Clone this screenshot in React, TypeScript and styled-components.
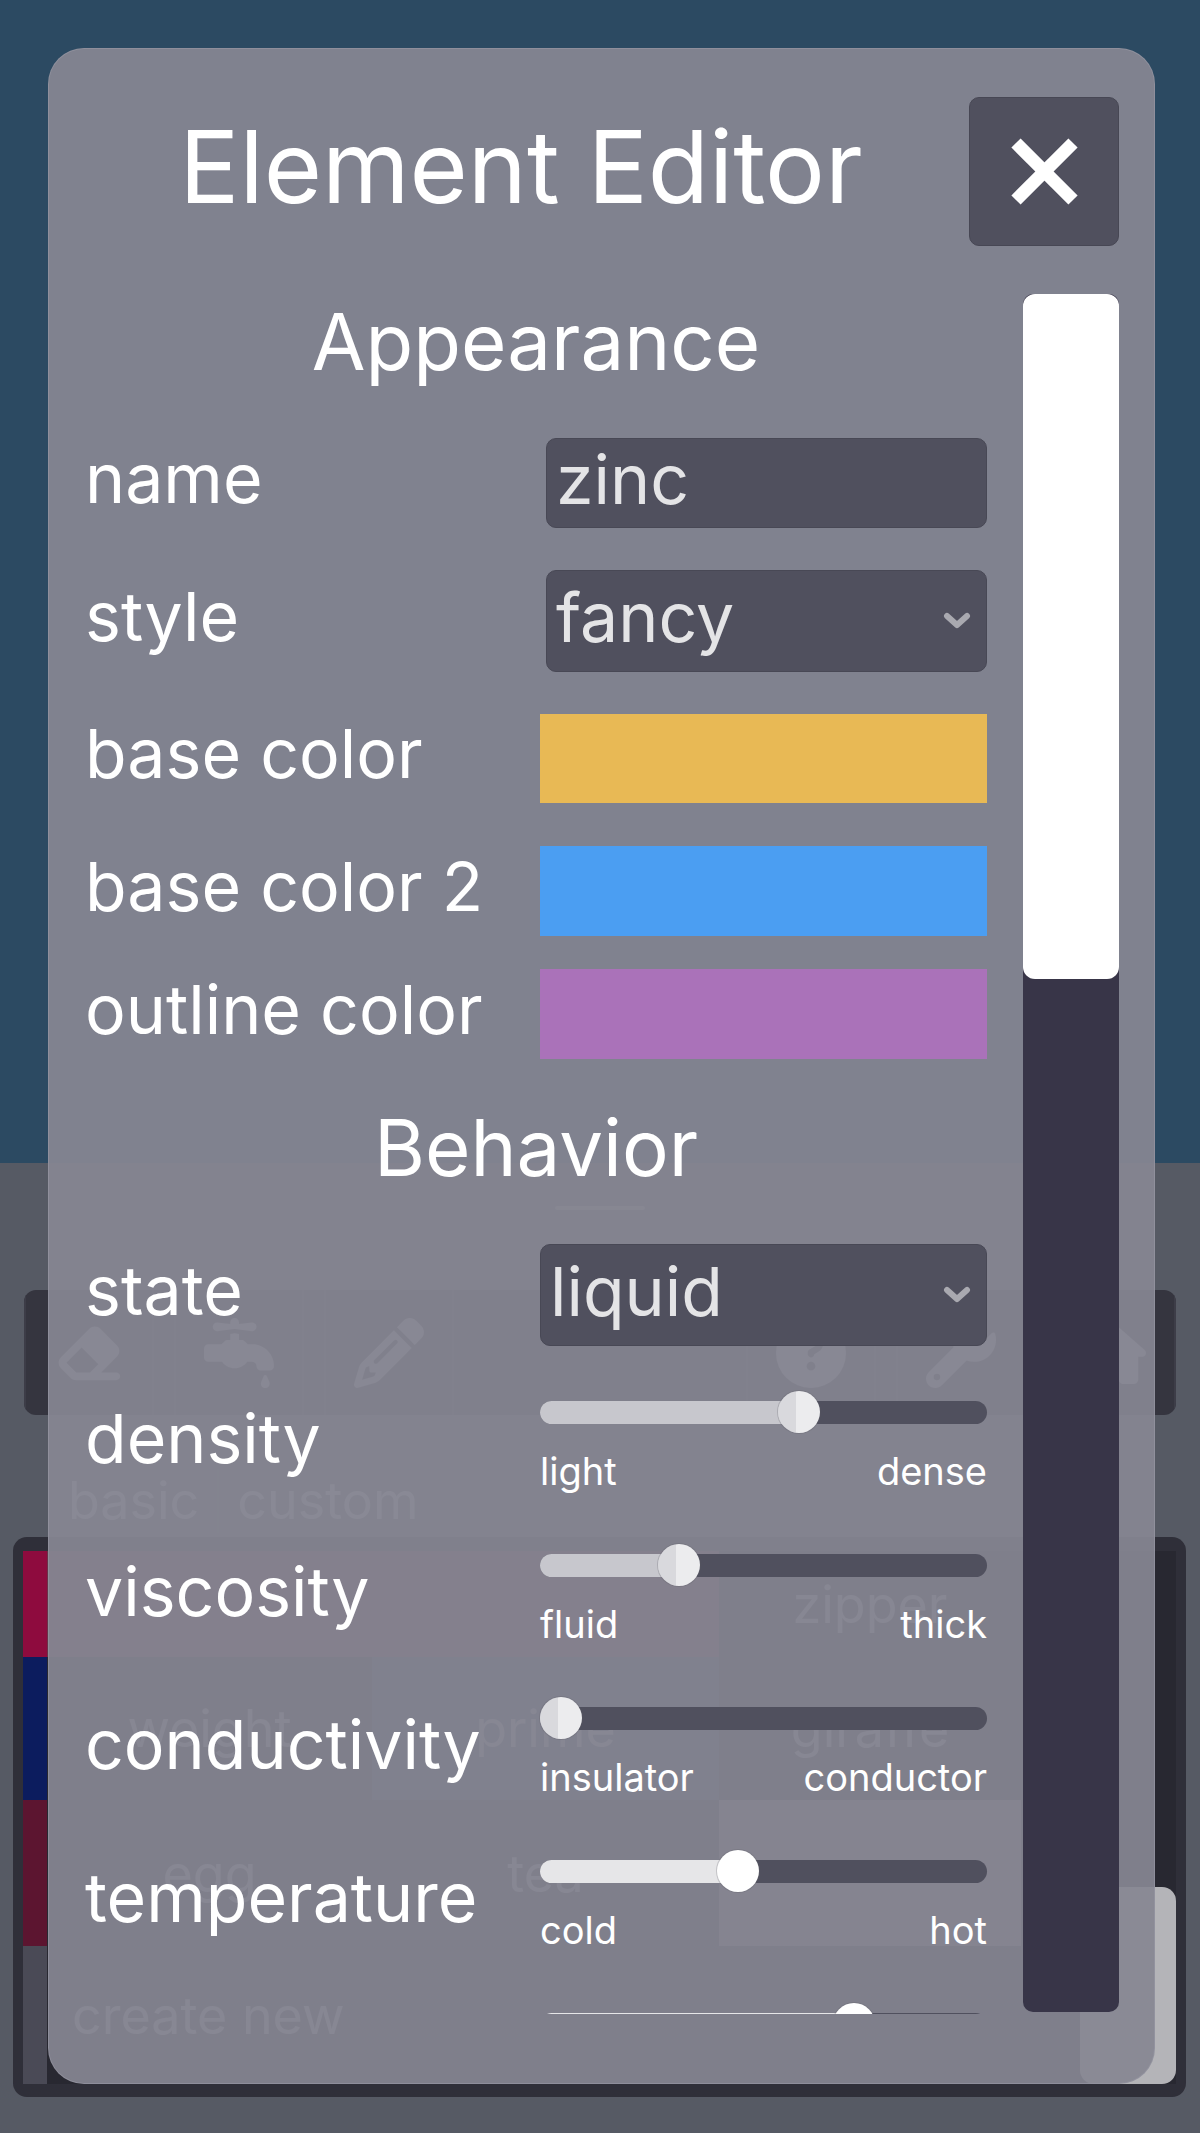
import React from "react";
import styled, { createGlobalStyle } from "styled-components";
import {
  FaEraser,
  FaFaucetDrip,
  FaPencil,
  FaCircleQuestion,
  FaWrench,
  FaHouse,
} from "react-icons/fa6";

const FONT = `Inter, "Noto Sans", "DejaVu Sans", sans-serif`;

const GlobalStyle = createGlobalStyle`
  * { box-sizing: border-box; }
  html, body { margin: 0; padding: 0; background: #565a64; }
  body { font-family: ${FONT}; }
`;

/* ---------- background app ---------- */

const Screen = styled.div`
  position: relative;
  width: 1200px;
  height: 2133px;
  overflow: hidden;
  display: flex;
  flex-direction: column;
  background: #565a64;
  font-family: ${FONT};
`;

const Canvas = styled.div`
  flex: none;
  height: 1163px;
  background: #2c4a62;
`;

const Dock = styled.div`
  flex: 1;
  display: flex;
  flex-direction: column;
`;

const Handle = styled.div`
  align-self: center;
  width: 90px;
  height: 4px;
  margin-top: 43px;
  border-radius: 2px;
  background: rgba(255, 255, 255, 0.3);
`;

const Toolbar = styled.div`
  margin: 80px 24px 0;
  height: 125px;
  border-radius: 12px;
  background: #35353f;
  display: flex;
  justify-content: space-between;
  overflow: hidden;
`;

const ToolGroup = styled.div`
  display: flex;
  gap: 20px;
`;

const ToolButton = styled.div`
  width: 130px;
  height: 100%;
  display: flex;
  align-items: center;
  justify-content: center;
  color: #9a9aa8;
  font-size: 70px;
  border-left: 2px solid #3d3d48;
  border-right: 2px solid #3d3d48;
`;

const Tabs = styled.div`
  margin-top: 50px;
  height: 72px;
  display: flex;
  align-items: center;
  padding-left: 68px;
  font-size: 52px;
  line-height: 64px;
  color: #a8aab4;
`;

const Tab = styled.span`
  padding-right: 18px;
  & + & {
    padding-left: 18px;
    border-left: 2px solid #5e626b;
  }
`;

const Panel = styled.div`
  position: relative;
  margin: 0 14px 0 13px;
  height: 560px;
  border-radius: 14px;
  background: #2f2f39;
  padding: 14px 10px 13px 10px;
  display: flex;
  flex-direction: column;
`;

const ListRow = styled.div<{ $h?: number }>`
  display: grid;
  grid-template-columns: 24px 325px 347px 302px 1fr;
  ${(p) => (p.$h ? `height: ${p.$h}px;` : "flex: 1;")}
`;

const Strip = styled.div<{ $c: string }>`
  background: ${(p) => p.$c};
`;

const Cell = styled.div<{ $tint?: string; $left?: boolean }>`
  display: flex;
  align-items: center;
  justify-content: ${(p) => (p.$left ? "flex-start" : "center")};
  padding-left: ${(p) => (p.$left ? "25px" : "0")};
  font-size: 52px;
  color: #8e8e9c;
  background: ${(p) => p.$tint || "#282831"};
`;

const FloatButton = styled.div`
  position: absolute;
  right: 10px;
  bottom: 13px;
  width: 96px;
  height: 197px;
  border-radius: 14px;
  background: #b4b4b8;
`;

/* ---------- modal ---------- */

const Modal = styled.section`
  position: absolute;
  left: 48px;
  top: 48px;
  width: 1107px;
  height: 2036px;
  border: 1px solid rgba(150, 150, 162, 0.7);
  border-radius: 36px;
  background: rgba(134, 134, 146, 0.93);
  padding: 48px 35px 71px 0;
  display: flex;
  flex-direction: column;
  color: #ffffff;
`;

const Header = styled.header`
  flex: none;
  height: 149px;
  display: flex;
  align-items: center;
  gap: 16px;
  padding-left: 40px;
`;

const Title = styled.h1`
  flex: 1;
  margin: 0 0 10px;
  text-align: center;
  font-size: 100px;
  font-weight: 400;
  line-height: 1.2;
  letter-spacing: 0;
`;

const CloseButton = styled.button`
  flex: none;
  width: 150px;
  height: 149px;
  padding: 0;
  border: 1px solid #474754;
  border-radius: 10px;
  background: #50505e;
  display: flex;
  align-items: center;
  justify-content: center;
`;

const Body = styled.div`
  flex: 1;
  min-height: 0;
  margin-top: 48px;
  display: flex;
`;

const Scroller = styled.div`
  flex: 1;
  min-width: 0;
  overflow: hidden;
  padding: 0 36px;
  margin-bottom: -2px;
`;

const ScrollTrack = styled.div`
  flex: none;
  width: 96px;
  border-radius: 10px;
  background: #383548;
  display: flex;
  flex-direction: column;
`;

const ScrollThumb = styled.div`
  height: 685px;
  border-radius: 12px;
  background: #ffffff;
`;

const SectionTitle = styled.h2<{ $h: number; $pt: number }>`
  margin: 0;
  height: ${(p) => p.$h}px;
  padding-top: ${(p) => p.$pt}px;
  font-size: 78px;
  font-weight: 400;
  line-height: 96px;
  text-align: center;
`;

const Row = styled.div<{ $h: number }>`
  height: ${(p) => p.$h}px;
  display: grid;
  grid-template-columns: 1fr 447px;
  align-items: center;
`;

const Label = styled.span`
  font-size: 68px;
  line-height: 82px;
  padding-bottom: 10px;
  white-space: nowrap;
`;

const Field = styled.div<{ $h: number; $inset: number }>`
  margin-left: ${(p) => p.$inset}px;
  height: ${(p) => p.$h}px;
  border: 1px solid #484855;
  border-radius: 10px;
  background: #50505e;
  display: flex;
  align-items: center;
  justify-content: space-between;
  padding: 0 14px 0 9px;
`;

const FieldText = styled.span`
  font-size: 68px;
  line-height: 82px;
  padding-bottom: 8px;
  color: #e4e4e6;
`;

const Swatch = styled.div<{ $c: string; $h: number }>`
  height: ${(p) => p.$h}px;
  background: ${(p) => p.$c};
`;

const SliderBox = styled.div`
  display: flex;
  flex-direction: column;
`;

const Track = styled.div`
  position: relative;
  height: 23px;
  margin: 9.5px 0;
  border-radius: 12px;
  background: #50505e;
`;

const Fill = styled.div<{ $hot?: boolean }>`
  position: absolute;
  left: 0;
  top: 0;
  bottom: 0;
  border-radius: 12px 0 0 12px;
  background: ${(p) => (p.$hot ? "#e6e6e8" : "#c7c7cd")};
`;

const Thumb = styled.div<{ $hot?: boolean }>`
  position: absolute;
  top: 50%;
  width: 42px;
  height: 42px;
  margin-left: -21px;
  margin-top: -21px;
  border-radius: 50%;
  background: ${(p) =>
    p.$hot
      ? "#ffffff"
      : "linear-gradient(90deg, #d9d9dd 0%, #d9d9dd 42%, #ececee 42%, #ececee 100%)"};
  box-shadow: 0 0 0 1px rgba(90, 90, 100, 0.25);
`;

const Ends = styled.div`
  margin-top: 15px;
  display: flex;
  justify-content: space-between;
  font-size: 38px;
  line-height: 46px;
`;

/* ---------- data ---------- */

const sliders = [
  { name: "density", lo: "light", hi: "dense", v: 0.587 },
  { name: "viscosity", lo: "fluid", hi: "thick", v: 0.292 },
  { name: "conductivity", lo: "insulator", hi: "conductor", v: 0 },
  { name: "temperature", lo: "cold", hi: "hot", v: 0.436, hot: true },
  { name: "hardness", lo: "soft", hi: "hard", v: 0.723, hot: true },
];

const Chevron = () => (
  <svg width="30" height="18" viewBox="0 0 30 18">
    <polyline
      points="5,4 15,13 25,4"
      fill="none"
      stroke="#a9a9b0"
      strokeWidth="6"
      strokeLinecap="round"
      strokeLinejoin="round"
    />
  </svg>
);

const CloseIcon = () => (
  <svg width="67" height="67" viewBox="0 0 67 67">
    <g stroke="#ffffff" strokeWidth="13" strokeLinecap="butt">
      <line x1="5" y1="5" x2="62" y2="62" />
      <line x1="62" y1="5" x2="5" y2="62" />
    </g>
  </svg>
);

const Slider = ({
  v,
  lo,
  hi,
  hot,
}: {
  v: number;
  lo: string;
  hi: string;
  hot?: boolean;
}) => {
  const pos = `calc(21px + ${v} * (100% - 42px))`;
  return (
    <SliderBox>
      <Track>
        <Fill $hot={hot} style={{ width: pos }} />
        <Thumb $hot={hot} style={{ left: pos }} />
      </Track>
      <Ends>
        <span>{lo}</span>
        <span>{hi}</span>
      </Ends>
    </SliderBox>
  );
};

export default function App() {
  return (
    <Screen>
      <GlobalStyle />
      <Canvas />
      <Dock>
        <Handle />
        <Toolbar>
          <ToolGroup>
            <ToolButton>
              <FaEraser />
            </ToolButton>
            <ToolButton>
              <FaFaucetDrip />
            </ToolButton>
            <ToolButton>
              <FaPencil />
            </ToolButton>
          </ToolGroup>
          <ToolGroup>
            <ToolButton>
              <FaCircleQuestion />
            </ToolButton>
            <ToolButton>
              <FaWrench />
            </ToolButton>
            <ToolButton>
              <FaHouse />
            </ToolButton>
          </ToolGroup>
        </Toolbar>
        <Tabs>
          <Tab>basic</Tab>
          <Tab>custom</Tab>
        </Tabs>
        <Panel>
          <ListRow $h={106}>
            <Strip $c="#8e0b3e" />
            <Cell $tint="#6a3048" />
            <Cell $tint="#6a3048" />
            <Cell>zipper</Cell>
            <Cell />
          </ListRow>
          <ListRow $h={143}>
            <Strip $c="#0c1c5e" />
            <Cell>weight</Cell>
            <Cell $tint="#303e5c">prime</Cell>
            <Cell>giraffe</Cell>
            <Cell />
          </ListRow>
          <ListRow $h={146}>
            <Strip $c="#5c1530" />
            <Cell>egg</Cell>
            <Cell>tea</Cell>
            <Cell $tint="#6e6874" />
            <Cell />
          </ListRow>
          <ListRow>
            <Strip $c="#4a4a56" />
            <Cell $left>create new</Cell>
            <Cell />
            <Cell />
            <Cell />
          </ListRow>
          <FloatButton />
        </Panel>
      </Dock>

      <Modal>
        <Header>
          <Title>Element Editor</Title>
          <CloseButton aria-label="close">
            <CloseIcon />
          </CloseButton>
        </Header>
        <Body>
          <Scroller>
            <SectionTitle $h={120} $pt={0}>
              Appearance
            </SectionTitle>
            <Row $h={138}>
              <Label>name</Label>
              <Field $h={90} $inset={6}>
                <FieldText>zinc</FieldText>
              </Field>
            </Row>
            <Row $h={138}>
              <Label>style</Label>
              <Field $h={102} $inset={6}>
                <FieldText>fancy</FieldText>
                <Chevron />
              </Field>
            </Row>
            <Row $h={136}>
              <Label>base color</Label>
              <Swatch $c="#e8b955" $h={89} />
            </Row>
            <Row $h={130}>
              <Label>base color 2</Label>
              <Swatch $c="#4b9ef2" $h={90} />
            </Row>
            <Row $h={116}>
              <Label>outline color</Label>
              <Swatch $c="#aa72b9" $h={90} />
            </Row>
            <SectionTitle $h={152} $pt={28}>
              Behavior
            </SectionTitle>
            <Row $h={142}>
              <Label>state</Label>
              <Field $h={102} $inset={0}>
                <FieldText>liquid</FieldText>
                <Chevron />
              </Field>
            </Row>
            {sliders.map((s) => (
              <Row $h={153} key={s.name}>
                <Label>{s.name}</Label>
                <Slider v={s.v} lo={s.lo} hi={s.hi} hot={s.hot} />
              </Row>
            ))}
          </Scroller>
          <ScrollTrack>
            <ScrollThumb />
          </ScrollTrack>
        </Body>
      </Modal>
    </Screen>
  );
}
